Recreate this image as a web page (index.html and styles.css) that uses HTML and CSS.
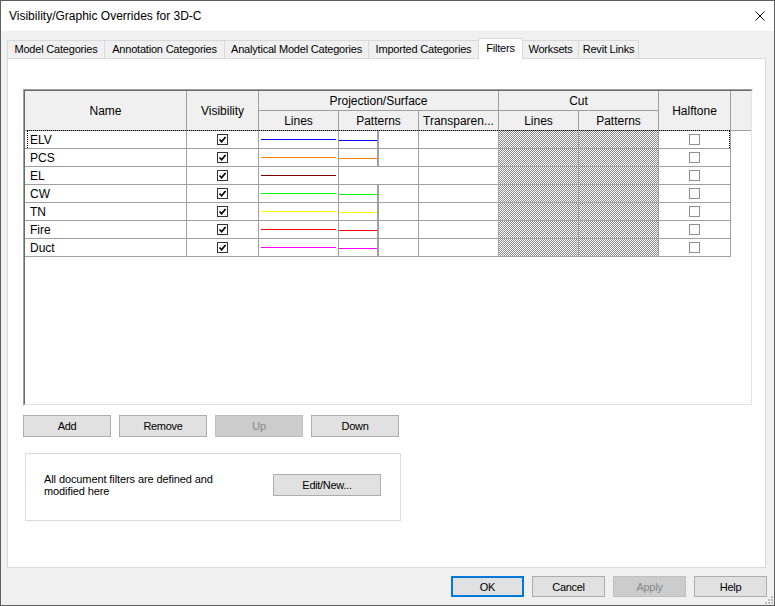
FILE: index.html
```html
<!DOCTYPE html>
<html>
<head>
<meta charset="utf-8">
<title>Visibility/Graphic Overrides for 3D-C</title>
<link rel="stylesheet" href="styles.css">
</head>
<body>
<div class="window">
  <div class="titlebar">
    <span class="title">Visibility/Graphic Overrides for 3D-C</span>
    <svg class="close" viewBox="0 0 10 10" width="10" height="10"><path d="M0.5 0.5 L9.5 9.5 M9.5 0.5 L0.5 9.5" stroke="#000" stroke-width="1" fill="none"/></svg>
  </div>
  <div class="client">
    <div class="tabs">
      <div class="tab w97">Model Categories</div>
      <div class="tab w120">Annotation Categories</div>
      <div class="tab w144">Analytical Model Categories</div>
      <div class="tab w110">Imported Categories</div>
      <div class="tab sel">Filters</div>
      <div class="tab w55 nol">Worksets</div>
      <div class="tab w61 last">Revit Links</div>
    </div>
    <div class="panel">
      <div class="grid-outer">
        <div class="grid-inner">
          <div class="table">
            <div class="h span2">Name</div>
            <div class="h span2">Visibility</div>
            <div class="h col3">Projection/Surface</div>
            <div class="h col2">Cut</div>
            <div class="h span2">Halftone</div>
            <div class="h span2 filler"></div>
            <div class="h">Lines</div>
            <div class="h">Patterns</div>
            <div class="h">Transparen...</div>
            <div class="h">Lines</div>
            <div class="h">Patterns</div>

            <div class="c name">ELV</div>
            <div class="c mid"><span class="cb on"><svg viewBox="0 0 9 9" width="9" height="9"><path d="M1.5 4.5 L3.6 6.8 L7.6 2" stroke="#000" stroke-width="1.7" fill="none"/></svg></span></div>
            <div class="c"><i class="ln blue"></i></div>
            <div class="c"><div class="pat"><i class="ln2 blue"></i></div></div>
            <div class="c"></div>
            <div class="c hatch"></div>
            <div class="c hatch"></div>
            <div class="c mid"><span class="cb off"></span></div>
            <div class="f"></div>

            <div class="c name">PCS</div>
            <div class="c mid"><span class="cb on"><svg viewBox="0 0 9 9" width="9" height="9"><path d="M1.5 4.5 L3.6 6.8 L7.6 2" stroke="#000" stroke-width="1.7" fill="none"/></svg></span></div>
            <div class="c"><i class="ln orange"></i></div>
            <div class="c"><div class="pat"><i class="ln2 orange"></i></div></div>
            <div class="c"></div>
            <div class="c hatch"></div>
            <div class="c hatch"></div>
            <div class="c mid"><span class="cb off"></span></div>
            <div class="f"></div>

            <div class="c name">EL</div>
            <div class="c mid"><span class="cb on"><svg viewBox="0 0 9 9" width="9" height="9"><path d="M1.5 4.5 L3.6 6.8 L7.6 2" stroke="#000" stroke-width="1.7" fill="none"/></svg></span></div>
            <div class="c"><i class="ln maroon"></i></div>
            <div class="c"></div>
            <div class="c"></div>
            <div class="c hatch"></div>
            <div class="c hatch"></div>
            <div class="c mid"><span class="cb off"></span></div>
            <div class="f"></div>

            <div class="c name">CW</div>
            <div class="c mid"><span class="cb on"><svg viewBox="0 0 9 9" width="9" height="9"><path d="M1.5 4.5 L3.6 6.8 L7.6 2" stroke="#000" stroke-width="1.7" fill="none"/></svg></span></div>
            <div class="c"><i class="ln green"></i></div>
            <div class="c"><div class="pat"><i class="ln2 green"></i></div></div>
            <div class="c"></div>
            <div class="c hatch"></div>
            <div class="c hatch"></div>
            <div class="c mid"><span class="cb off"></span></div>
            <div class="f"></div>

            <div class="c name">TN</div>
            <div class="c mid"><span class="cb on"><svg viewBox="0 0 9 9" width="9" height="9"><path d="M1.5 4.5 L3.6 6.8 L7.6 2" stroke="#000" stroke-width="1.7" fill="none"/></svg></span></div>
            <div class="c"><i class="ln yellow"></i></div>
            <div class="c"><div class="pat"><i class="ln2 yellow"></i></div></div>
            <div class="c"></div>
            <div class="c hatch"></div>
            <div class="c hatch"></div>
            <div class="c mid"><span class="cb off"></span></div>
            <div class="f"></div>

            <div class="c name">Fire</div>
            <div class="c mid"><span class="cb on"><svg viewBox="0 0 9 9" width="9" height="9"><path d="M1.5 4.5 L3.6 6.8 L7.6 2" stroke="#000" stroke-width="1.7" fill="none"/></svg></span></div>
            <div class="c"><i class="ln red"></i></div>
            <div class="c"><div class="pat"><i class="ln2 red"></i></div></div>
            <div class="c"></div>
            <div class="c hatch"></div>
            <div class="c hatch"></div>
            <div class="c mid"><span class="cb off"></span></div>
            <div class="f"></div>

            <div class="c name">Duct</div>
            <div class="c mid"><span class="cb on"><svg viewBox="0 0 9 9" width="9" height="9"><path d="M1.5 4.5 L3.6 6.8 L7.6 2" stroke="#000" stroke-width="1.7" fill="none"/></svg></span></div>
            <div class="c"><i class="ln magenta"></i></div>
            <div class="c"><div class="pat"><i class="ln2 magenta"></i></div></div>
            <div class="c"></div>
            <div class="c hatch"></div>
            <div class="c hatch"></div>
            <div class="c mid"><span class="cb off"></span></div>
            <div class="f"></div>
          </div>
          <div class="focus"></div>
        </div>
      </div>

      <div class="btnrow">
        <button class="btn">Add</button>
        <button class="btn">Remove</button>
        <button class="btn dis">Up</button>
        <button class="btn">Down</button>
      </div>

      <div class="group">
        <div class="gtext">All document filters are defined and<br>modified here</div>
        <button class="btn edit">Edit/New...</button>
      </div>
    </div>
    <div class="footer">
      <button class="btn fb ok">OK</button>
      <button class="btn fb">Cancel</button>
      <button class="btn fb dis">Apply</button>
      <button class="btn fb">Help</button>
    </div>
  </div>
  <svg class="grip" width="9" height="9" viewBox="0 0 9 9">
    <rect x="7" y="1" width="2" height="2" fill="#bdbdbd"/>
    <rect x="4" y="4" width="2" height="2" fill="#bdbdbd"/>
    <rect x="7" y="4" width="2" height="2" fill="#bdbdbd"/>
    <rect x="1" y="7" width="2" height="2" fill="#bdbdbd"/>
    <rect x="4" y="7" width="2" height="2" fill="#bdbdbd"/>
    <rect x="7" y="7" width="2" height="2" fill="#bdbdbd"/>
  </svg>
</div>
</body>
</html>
```
FILE: styles.css
```css
* { box-sizing: border-box; }
html, body { margin: 0; padding: 0; }
body {
  width: 775px;
  height: 606px;
  overflow: hidden;
  background: #f0f0f0;
  color: #000;
  font-family: "Liberation Sans", Arial, sans-serif;
}
.window {
  width: 775px;
  height: 606px;
  border: 1px solid #5f5f5f;
  background: #f0f0f0;
  display: flex;
  flex-direction: column;
  position: relative;
}
.titlebar {
  flex: none;
  height: 30px;
  background: #fff;
  display: flex;
  align-items: center;
  justify-content: space-between;
  padding: 0 9px 0 8px;
  font-size: 12px;
}
.close { display: block; }

.client {
  flex: 1;
  display: flex;
  flex-direction: column;
  padding: 7px 8px 0 6px;
}
.tabs {
  display: flex;
  align-items: flex-end;
  height: 20px;
  font-size: 11px;
  letter-spacing: -0.2px;
  position: relative;
  z-index: 1;
}
.tab {
  height: 18px;
  background: #f0f0f0;
  border-top: 1px solid #d9d9d9;
  border-left: 1px solid #d9d9d9;
  display: flex;
  align-items: center;
  justify-content: center;
  white-space: nowrap;
  padding-bottom: 1px;
}
.w97 { width: 97px; }
.w120 { width: 120px; }
.w144 { width: 144px; }
.w110 { width: 110px; }
.w55 { width: 55px; }
.w61 { width: 61px; }
.nol { border-left: none; }
.last { border-right: 1px solid #d9d9d9; }
.tab.sel {
  width: 45px;
  height: 21px;
  margin-bottom: -1px;
  background: #fff;
  border-right: 1px solid #d9d9d9;
  padding-bottom: 3px;
}

.panel {
  width: 759px;
  height: 510px;
  background: #fff;
  border: 1px solid #d9d9d9;
  padding: 30px 0 0 15px;
}
.grid-outer {
  width: 730px;
  height: 317px;
  border: 1px solid;
  border-color: #a0a0a0 #fff #fff #a0a0a0;
}
.grid-inner {
  height: 100%;
  border: 1px solid;
  border-color: #696969 #e3e3e3 #e3e3e3 #696969;
  background: #fff;
  position: relative;
}
.table {
  display: grid;
  grid-template-columns: 162px 72px 80px 80px 80px 80px 80px 72px 20px;
  grid-template-rows: 20px 20px repeat(7, 18px);
}
.h {
  background: #f0f0f0;
  border-right: 1px solid #a0a0a0;
  border-bottom: 1px solid #a0a0a0;
  display: flex;
  align-items: center;
  justify-content: center;
  font-size: 12px;
  white-space: nowrap;
}
.span2 { grid-row: span 2; }
.col3 { grid-column: span 3; }
.col2 { grid-column: span 2; }
.h.filler { border-right: none; }

.c {
  border-right: 1px solid #a0a0a0;
  border-bottom: 1px solid #a0a0a0;
  background: #fff;
  position: relative;
}
.f { background: #fff; }
.name {
  display: flex;
  align-items: center;
  padding-left: 5px;
  font-size: 12px;
}
.mid {
  display: flex;
  align-items: center;
  justify-content: center;
}
.cb {
  width: 11px;
  height: 11px;
  background: #fff;
  border: 1px solid #333;
  display: flex;
  align-items: center;
  justify-content: center;
}
.cb svg { display: block; }
.cb.off { border-color: #8f8f8f; }

.ln {
  display: block;
  width: 75px;
  height: 1px;
  margin: 8px 0 0 2px;
}
.pat {
  width: 40px;
  height: 17px;
  border-right: 2px solid #a0a0a0;
  padding-top: 9px;
}
.ln2 {
  display: block;
  width: 38px;
  height: 1px;
}
.blue { background: #0000ff; }
.orange { background: #ff8000; }
.maroon { background: #800000; }
.green { background: #00ff00; }
.yellow { background: #ffff00; }
.red { background: #ff0000; }
.magenta { background: #ff00ff; }

.hatch {
  background: repeating-conic-gradient(#8c8c8c 0 25%, #ffffff 0 50%) 0 0 / 2px 2px;
}

.focus {
  position: absolute;
  left: 2px;
  top: 39px;
  width: 703px;
  height: 18px;
  border: 1px dotted #000;
  border-bottom: none;
  pointer-events: none;
}

.btn {
  margin: 0;
  padding: 0;
  width: 88px;
  height: 22px;
  background: #e1e1e1;
  border: 1px solid #adadad;
  border-radius: 0;
  font-family: "Liberation Sans", Arial, sans-serif;
  font-size: 11px;
  letter-spacing: -0.3px;
  color: #000;
  display: flex;
  align-items: center;
  justify-content: center;
}
.btn.dis {
  background: #cccccc;
  border-color: #bfbfbf;
  color: #8a8a8a;
}
.btnrow {
  display: flex;
  gap: 8px;
  margin-top: 9px;
}
.group {
  width: 376px;
  height: 68px;
  margin: 16px 0 0 2px;
  border: 1px solid #dcdcdc;
  display: flex;
  align-items: center;
  padding: 0 0 4px 18px;
}
.gtext {
  width: 229px;
  font-size: 11px;
  line-height: 12px;
  letter-spacing: -0.1px;
}
.btn.edit { width: 108px; }

.footer {
  display: flex;
  justify-content: flex-end;
  gap: 8px;
  padding-top: 8px;
  margin-right: -1px;
}
.btn.fb {
  width: 73px;
  height: 21px;
}
.btn.ok { border: 2px solid #0078d7; }

.grip {
  position: absolute;
  right: 1px;
  bottom: 1px;
}
```
